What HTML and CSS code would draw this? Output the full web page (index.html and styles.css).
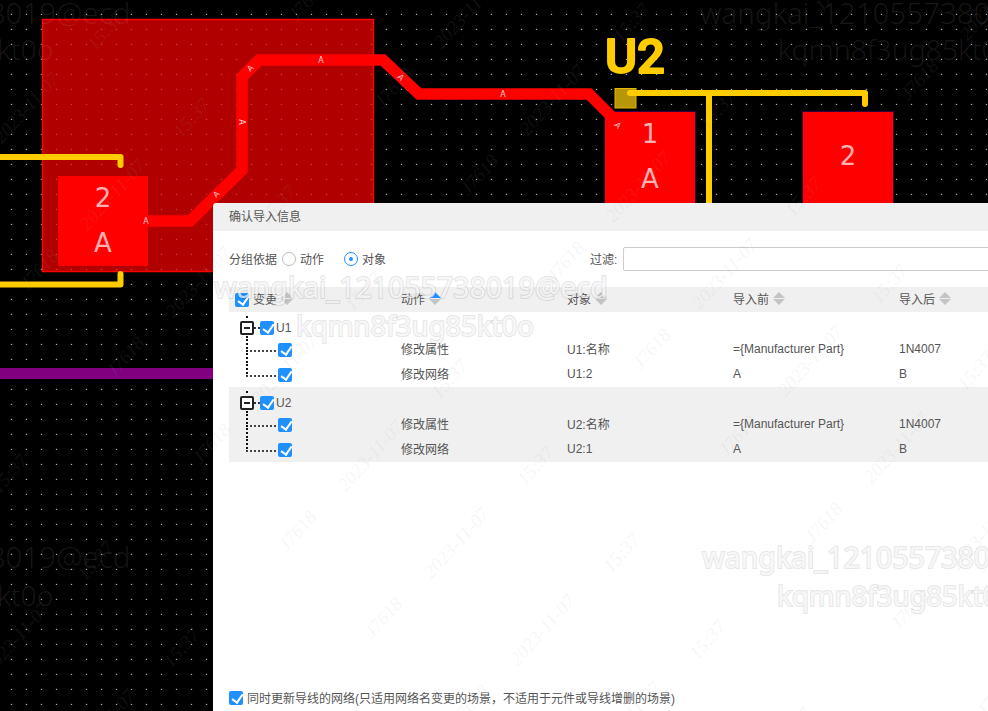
FILE: index.html
```html
<!DOCTYPE html>
<html lang="en">

<head>
    <meta charset="UTF-8">
    <meta name="viewport" content="width=device-width, initial-scale=1.0">
    <title>确认导入信息</title>
    <link rel="stylesheet" href="styles.css">
</head>

<body>
    <div class="board">
        <!-- pcb canvas -->
        <svg class="pcb" width="988" height="711" viewBox="0 0 988 711">
            <defs>
                <pattern id="gridDots" width="15" height="15" patternUnits="userSpaceOnUse">
                    <rect x="10" y="14" width="3" height="1" fill="#fff" opacity="0.1" />
                    <rect x="11" y="13" width="1" height="3" fill="#fff" opacity="0.1" />
                    <rect x="11" y="14" width="1" height="1" fill="#fff" opacity="0.6" />
                </pattern>
            </defs>
            <rect width="988" height="711" fill="url(#gridDots)" />
            <rect class="pour" x="42.5" y="19.5" width="331" height="252" />
            <rect class="pad" x="58" y="176" width="90" height="90" />
            <rect class="pad pad-outline" x="604.5" y="111.5" width="91" height="110" />
            <rect class="pad pad-outline" x="802.5" y="111.5" width="91" height="110" />
            <polyline class="track" points="148,221 190,221 242,170 242,77 259,60 383,60 419,94 589,94 622,127" />
            <rect x="0" y="368" width="214" height="11" fill="#800080" />
            <rect x="615" y="88.5" width="21" height="19.5" fill="#b8960a" stroke="#e6b800" />
            <polyline class="wire" points="0,157 120.5,157 120.5,165" />
            <polyline class="wire" points="120.5,274 120.5,284.5 0,284.5" />
            <polyline class="wire" points="630,93 865,93 865,104" />
            <line class="wire" x1="709" y1="93" x2="709" y2="210" />
            <text class="refdes" x="635" y="73">U2</text>
            <text class="pad-text" x="103" y="207">2</text>
            <text class="pad-text" x="103" y="252">A</text>
            <text class="pad-text" x="650" y="143">1</text>
            <text class="pad-text" x="650" y="188">A</text>
            <text class="pad-text" x="848" y="165">2</text>
            <text class="net" x="146" y="224">A</text>
            <text class="net" transform="translate(216 194) rotate(-45)" y="3">A</text>
            <text class="net" transform="translate(242 122) rotate(90)" y="3">A</text>
            <text class="net" transform="translate(250 68) rotate(-45)" y="3">A</text>
            <text class="net" x="321" y="63">A</text>
            <text class="net" transform="translate(401 77) rotate(45)" y="3">A</text>
            <text class="net" x="503" y="97">A</text>
            <text class="net" transform="translate(618 125) rotate(45)" y="3">A</text>
            <g class="wm-big wm-dark">
                <text x="-69" y="24">wangkai_121055738019@ecd</text>
                <text class="wm-line2" x="-65" y="60">kqmn8f3ug85kt0o</text>
                <text x="899" y="24">wangkai_121055738019@ecd</text>
                <text class="wm-line2" x="896" y="60">kqmn8f3ug85kt0o</text>
                <text x="-69" y="568">wangkai_121055738019@ecd</text>
                <text class="wm-line2" x="-65" y="606">kqmn8f3ug85kt0o</text>
            </g>
        </svg>

        <div class="dialog">
            <div class="dialog-title">确认导入信息</div>
            <div class="toolbar">
                <span>分组依据</span>
                <span class="radio"></span>
                <span class="radio-label">动作</span>
                <span class="radio radio-on"></span>
                <span class="radio-label">对象</span>
                <span class="filter-label">过滤:</span>
                <span class="filter-input"></span>
            </div>

            <div class="grid-row grid-head">
                <div class="cell"><span class="check head-check"></span>变更<span class="sort"></span></div>
                <div class="cell">动作<span class="sort sort-up"></span></div>
                <div class="cell">对象<span class="sort"></span></div>
                <div class="cell">导入前<span class="sort"></span></div>
                <div class="cell">导入后<span class="sort"></span></div>
            </div>

            <div class="group">
                <div class="grid-row">
                    <div class="cell tree-parent"><span class="tree-box"></span><span class="check"></span>U1</div>
                </div>
                <div class="grid-row">
                    <div class="cell tree-child"><span class="check"></span></div>
                    <div class="cell text-cell">修改属性</div>
                    <div class="cell text-cell">U1:名称</div>
                    <div class="cell text-cell">={Manufacturer Part}</div>
                    <div class="cell text-cell">1N4007</div>
                </div>
                <div class="grid-row">
                    <div class="cell tree-child tree-last"><span class="check"></span></div>
                    <div class="cell text-cell">修改网络</div>
                    <div class="cell text-cell">U1:2</div>
                    <div class="cell text-cell">A</div>
                    <div class="cell text-cell">B</div>
                </div>
            </div>

            <div class="group group-alt">
                <div class="grid-row">
                    <div class="cell tree-parent"><span class="tree-box"></span><span class="check"></span>U2</div>
                </div>
                <div class="grid-row">
                    <div class="cell tree-child"><span class="check"></span></div>
                    <div class="cell text-cell">修改属性</div>
                    <div class="cell text-cell">U2:名称</div>
                    <div class="cell text-cell">={Manufacturer Part}</div>
                    <div class="cell text-cell">1N4007</div>
                </div>
                <div class="grid-row">
                    <div class="cell tree-child tree-last"><span class="check"></span></div>
                    <div class="cell text-cell">修改网络</div>
                    <div class="cell text-cell">U2:1</div>
                    <div class="cell text-cell">A</div>
                    <div class="cell text-cell">B</div>
                </div>
            </div>

            <div class="dialog-foot">
                <span class="check"></span>同时更新导线的网络(只适用网络名变更的场景，不适用于元件或导线增删的场景)
            </div>
        </div>

        <!-- watermark sits over everything -->
        <svg class="watermark" width="988" height="711" viewBox="0 0 988 711">
            <defs>
                <g id="wmTile">
                    <text transform="rotate(-48)">J7618</text>
                    <text transform="translate(159 12) rotate(-48)">2023-11-07</text>
                    <text transform="translate(324 22) rotate(-48)">15:37</text>
                </g>
            </defs>
            <g class="wm-small">
                <use href="#wmTile" x="-214" y="13" />
                <use href="#wmTile" x="-128" y="100" />
                <use href="#wmTile" x="-42" y="187" />
                <use href="#wmTile" x="44" y="274" />
                <use href="#wmTile" x="130" y="361" />
                <use href="#wmTile" x="216" y="448" />
                <use href="#wmTile" x="302" y="535" />
                <use href="#wmTile" x="388" y="622" />
                <use href="#wmTile" x="474" y="709" />
                <use href="#wmTile" x="-310" y="456" />
                <use href="#wmTile" x="-224" y="543" />
                <use href="#wmTile" x="-138" y="630" />
                <use href="#wmTile" x="-52" y="717" />
                <use href="#wmTile" x="312" y="5" />
                <use href="#wmTile" x="398" y="92" />
                <use href="#wmTile" x="484" y="179" />
                <use href="#wmTile" x="570" y="266" />
                <use href="#wmTile" x="656" y="353" />
                <use href="#wmTile" x="742" y="440" />
                <use href="#wmTile" x="828" y="527" />
                <use href="#wmTile" x="914" y="614" />
                <use href="#wmTile" x="1000" y="701" />
                <use href="#wmTile" x="838" y="-3" />
                <use href="#wmTile" x="924" y="84" />
            </g>
            <g class="wm-big wm-light">
                <text x="411" y="298">wangkai_121055738019@ecd</text>
                <text class="wm-line2" x="415" y="336">kqmn8f3ug85kt0o</text>
                <text x="899" y="568">wangkai_121055738019@ecd</text>
                <text class="wm-line2" x="896" y="606">kqmn8f3ug85kt0o</text>
            </g>
        </svg>
    </div>
</body>

</html>
```
FILE: styles.css
```css
* {
    box-sizing: border-box;
}

body {
    margin: 0;
    background-color: #000;
    font-family: "Liberation Sans", "Noto Sans CJK SC", sans-serif;
    font-size: 12px;
    color: #555;
    overflow: hidden;
}

.board {
    position: relative;
    width: 988px;
    height: 711px;
    overflow: hidden;
}

.pcb,
.watermark {
    position: absolute;
    left: 0;
    top: 0;
}

.watermark {
    pointer-events: none;
}

/* pcb shapes */
.pour {
    fill: rgba(255, 0, 0, 0.69);
    stroke: #f00;
    stroke-width: 1.5;
}

.pad {
    fill: #f00;
}

.pad-outline {
    stroke: #300040;
    stroke-width: 1;
}

.track {
    fill: none;
    stroke: #f00;
    stroke-width: 11.5;
    stroke-linejoin: miter;
}

.wire {
    fill: none;
    stroke: #fc0;
    stroke-width: 6;
    stroke-linecap: round;
    stroke-linejoin: round;
}

.refdes {
    font-family: "Roboto", sans-serif;
    font-size: 49px;
    font-weight: 500;
    fill: #fc0;
    stroke: #fc0;
    stroke-width: 2;
    stroke-linejoin: round;
    text-anchor: middle;
}

.pad-text {
    font-family: "DejaVu Sans", sans-serif;
    font-size: 26px;
    fill: #ffb0b0;
    text-anchor: middle;
}

.net {
    font-family: "DejaVu Sans", sans-serif;
    font-size: 8px;
    fill: #ffd0d0;
    text-anchor: middle;
}

/* watermark text */
.wm-small {
    font-family: "Liberation Serif", serif;
    font-style: italic;
    font-size: 19px;
    fill: rgba(164, 164, 164, 0.11);
    text-anchor: middle;
}

.wm-big {
    font-family: "Noto Sans", sans-serif;
    font-size: 28.5px;
    text-anchor: middle;
}

.wm-line2 {
    font-size: 27.5px;
}

.wm-dark {
    font-size: 29.5px;
    font-weight: 300;
    fill: rgba(255, 255, 255, 0.09);
}

.wm-dark .wm-line2 {
    font-size: 28.3px;
}

.wm-light {
    fill: rgba(255, 255, 255, 0.7);
    stroke: rgba(0, 0, 0, 0.09);
    stroke-width: 2.5;
    paint-order: stroke;
}

/* dialog */
.dialog {
    position: absolute;
    left: 213px;
    top: 203px;
    width: 790px;
    height: 520px;
    display: flex;
    flex-direction: column;
    background-color: #fff;
    border-radius: 4px 0 0 0;
}

.dialog-title {
    height: 28px;
    line-height: 28px;
    padding-left: 16px;
    background-color: #f0f0f0;
    border-radius: 4px 0 0 0;
}

.toolbar {
    display: flex;
    align-items: center;
    height: 24px;
    margin-top: 16px;
    margin-bottom: 16px;
    padding-left: 16px;
}

.toolbar span:not(.radio):not(.filter-input) {
    padding-bottom: 2px;
}

.radio {
    width: 14px;
    height: 14px;
    margin-left: 5px;
    border: 1px solid #bbb;
    border-radius: 50%;
}

.radio-on {
    position: relative;
    margin-left: 0;
    border-color: #1e90ff;
}

.radio-on::after {
    content: "";
    position: absolute;
    left: 4px;
    top: 4px;
    width: 4px;
    height: 4px;
    border-radius: 50%;
    background-color: #1e90ff;
}

.radio-label {
    width: 44px;
    margin-left: 4px;
}

.radio-label:last-of-type {
    width: 24px;
}

.filter-label {
    margin-left: 184px;
    width: 33px;
}

.filter-input {
    flex: 1;
    height: 24px;
    border: 1px solid #ccc;
    border-radius: 2px;
}

.grid-row {
    display: grid;
    grid-template-columns: 172px 166px 166px 166px 1fr;
    height: 25px;
    margin-left: 16px;
}

.grid-head {
    background-color: #f0f0f0;
}

.grid-head .cell {
    padding-bottom: 2px;
}

.cell {
    display: flex;
    align-items: center;
}

.text-cell {
    padding-bottom: 2px;
}

.group-alt {
    margin-left: 16px;
    background-color: #f0f0f0;
}

.group-alt .grid-row {
    margin-left: 0;
}

/* checkbox */
.check {
    position: relative;
    flex: none;
    width: 14px;
    height: 14px;
    border-radius: 2px;
    background-color: #1e90ff;
}

.check::after {
    content: "";
    position: absolute;
    left: 5px;
    top: 1.5px;
    width: 5px;
    height: 9px;
    border: solid #fff;
    border-width: 0 2px 2px 0;
    transform: rotate(35deg);
}

.head-check {
    margin-left: 6px;
    margin-right: 4px;
}

.grid-head .head-check {
    margin-top: 2px;
}

/* sort arrows */
.sort {
    position: relative;
    width: 12px;
    height: 13px;
    margin-left: 4px;
}

.sort::before,
.sort::after {
    content: "";
    position: absolute;
    left: 0;
    border-left: 6px solid transparent;
    border-right: 6px solid transparent;
}

.sort::before {
    top: 0;
    border-bottom: 6px solid #c4c4c4;
}

.sort::after {
    bottom: 0;
    border-top: 6px solid #c4c4c4;
}

.sort-up::before {
    border-bottom-color: #1e90ff;
}

/* tree */
.tree-parent {
    position: relative;
    padding-left: 11px;
    padding-top: 6px;
}

.tree-parent::before {
    content: "";
    position: absolute;
    left: 17px;
    top: 4px;
    height: 7px;
    border-left: 2px dotted #111;
}

.tree-box {
    position: relative;
    width: 14px;
    height: 14px;
    margin-right: 6px;
    background-color: #fff;
    border: 2px solid #222;
    border-radius: 2px;
}

.tree-box::before {
    content: "";
    position: absolute;
    left: 2px;
    top: 4px;
    width: 6px;
    height: 2px;
    background-color: #222;
}

.tree-box::after {
    content: "";
    position: absolute;
    left: 12px;
    top: 4px;
    width: 6px;
    border-top: 2px dotted #333;
}

.tree-parent .check {
    margin-right: 2px;
}

.tree-child {
    position: relative;
    padding-left: 49px;
}

.tree-child::before {
    content: "";
    position: absolute;
    left: 17px;
    top: -1px;
    height: 14px;
    width: 32px;
    border-left: 2px dotted #111;
    border-bottom: 2px dotted #444;
}

.tree-child:not(.tree-last)::after {
    content: "";
    position: absolute;
    left: 17px;
    top: 13px;
    height: 13px;
    border-left: 2px dotted #111;
}

.dialog-foot {
    display: flex;
    align-items: center;
    gap: 4px;
    margin-top: auto;
    margin-bottom: 17px;
    padding-left: 16px;
}
```
